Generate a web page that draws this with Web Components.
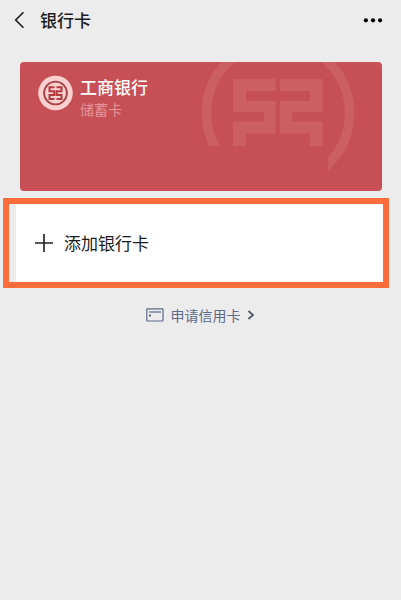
<!DOCTYPE html>
<html lang="zh-CN">
<head>
<meta charset="utf-8">
<meta name="viewport" content="width=device-width, initial-scale=1">
<title>银行卡</title>
<style>
    body {
        margin: 0;
        min-height: 100vh;
        background: #ececec;
        color: #1c1c1c;
        font-family: "Noto Sans CJK SC", "Noto Sans", sans-serif;
    }
</style>
</head>
<body>
<wallet-page>
    <wallet-header slot="header">银行卡</wallet-header>
    <bank-card>
        工商银行
        <span slot="type">储蓄卡</span>
    </bank-card>
    <add-card>添加银行卡</add-card>
    <apply-link slot="footer">申请信用卡</apply-link>
</wallet-page>

<script>
class WalletPage extends HTMLElement {
    constructor() {
        super();
        this.attachShadow({ mode: "open" });
    }

    connectedCallback() {
        this.shadowRoot.innerHTML = `
            <style>
                :host { display: block; }
                main {
                    display: flex;
                    flex-direction: column;
                    gap: 7px;
                    padding-top: 22px;
                }
                footer {
                    display: flex;
                    justify-content: center;
                    padding-top: 15px;
                }
            </style>
            <slot name="header"></slot>
            <main><slot></slot></main>
            <footer><slot name="footer"></slot></footer>
        `;
    }
}

class WalletHeader extends HTMLElement {
    constructor() {
        super();
        this.attachShadow({ mode: "open" });
    }

    connectedCallback() {
        this.shadowRoot.innerHTML = `
            <style>
                :host { display: block; }
                header {
                    display: flex;
                    align-items: center;
                    height: 40px;
                    padding: 0 16px 0 12px;
                }
                h1 {
                    flex: 1;
                    margin: 0 0 0 12px;
                    font-size: 17px;
                    line-height: 24px;
                    font-weight: 500;
                }
                button {
                    display: flex;
                    padding: 0;
                    border: none;
                    background: none;
                    color: inherit;
                }
            </style>
            <header>
                <button type="button" aria-label="返回">
                    <svg width="16" height="20" viewBox="0 0 16 20" fill="none" stroke="currentColor" stroke-width="1.6">
                        <path d="M11.5 2.2L3.7 10L11.5 17.8"/>
                    </svg>
                </button>
                <h1><slot></slot></h1>
                <button type="button" aria-label="更多">
                    <svg width="22" height="20" viewBox="0 0 22 20" fill="#000">
                        <circle cx="2.9" cy="10.3" r="2.1"/>
                        <circle cx="10" cy="10.3" r="2.1"/>
                        <circle cx="17.1" cy="10.3" r="2.1"/>
                    </svg>
                </button>
            </header>
        `;
    }
}

class BankCard extends HTMLElement {
    constructor() {
        super();
        this.attachShadow({ mode: "open" });
    }

    connectedCallback() {
        this.shadowRoot.innerHTML = `
            <style>
                :host { display: block; }
                article {
                    position: relative;
                    display: flex;
                    gap: 7px;
                    box-sizing: border-box;
                    min-height: 129px;
                    margin: 0 19px 0 20px;
                    padding: 13px 18px;
                    border-radius: 4px;
                    background: #c75056;
                    color: #fff;
                    overflow: hidden;
                }
                .watermark {
                    position: absolute;
                    top: 0;
                    right: 0;
                    color: #cb5f64;
                }
                .logo { flex: none; }
                .text { position: relative; }
                h2 {
                    margin: 0;
                    font-size: 17px;
                    line-height: 24px;
                    font-weight: 500;
                }
                p {
                    margin: 0;
                    font-size: 14px;
                    line-height: 20px;
                    color: #e59599;
                }
            </style>
            <article>
                <svg class="watermark" width="200" height="129" viewBox="162 0 200 129" aria-hidden="true">
                    <defs>
                        <clipPath id="cut"><path d="M162 0H258V84H162ZM308 0H362V129H308ZM258 0H308V40H258Z"/></clipPath>
                    </defs>
                    <circle cx="258" cy="51" r="71.5" fill="none" stroke="currentColor" stroke-width="9.5" clip-path="url(#cut)"/>
                    <path fill="currentColor" d="M213 17H255.5V29H226V39H255.5V71.5H226V84H213V59.5H244V50H213Z"/>
                    <path fill="currentColor" d="M302.5 17H260V29H290V39H260V71.5H290V84H302.5V59.5H272V50H302.5Z"/>
                </svg>
                <svg class="logo" width="35" height="36" viewBox="0 0 35 36" aria-hidden="true">
                    <circle cx="17.5" cy="18" r="17.3" fill="#fbd0d0"/>
                    <circle cx="17.5" cy="18" r="11.4" fill="none" stroke="#a94348" stroke-width="1.9"/>
                    <path fill="none" stroke="#b5383e" stroke-width="2" d="M16.5 12.3H11.5V16.2H16.3V20H11.5V23.9H16.5M18.5 12.3H23.5V16.2H18.7V20H23.5V23.9H18.5"/>
                </svg>
                <div class="text">
                    <h2><slot></slot></h2>
                    <p><slot name="type"></slot></p>
                </div>
            </article>
        `;
    }
}

class AddCard extends HTMLElement {
    constructor() {
        super();
        this.attachShadow({ mode: "open" });
    }

    connectedCallback() {
        this.shadowRoot.innerHTML = `
            <style>
                :host {
                    display: block;
                    margin: 0 12px 0 3px;
                    padding-left: 7px;
                    border: 6px solid #fd6d3b;
                }
                button {
                    display: flex;
                    align-items: center;
                    gap: 10px;
                    width: 100%;
                    height: 78px;
                    padding: 0 18px;
                    border: none;
                    background: #fff;
                    color: inherit;
                    font: 17px/24px "Noto Sans CJK SC", "Noto Sans", sans-serif;
                }
            </style>
            <button type="button">
                <svg width="20" height="20" viewBox="0 0 20 20" fill="none" stroke="currentColor" stroke-width="1.6" aria-hidden="true">
                    <path d="M10 1V19M1 10H19"/>
                </svg>
                <slot></slot>
            </button>
        `;
    }
}

class ApplyLink extends HTMLElement {
    constructor() {
        super();
        this.attachShadow({ mode: "open" });
    }

    connectedCallback() {
        this.shadowRoot.innerHTML = `
            <style>
                :host { display: block; }
                a {
                    display: flex;
                    align-items: center;
                    color: #5b6a89;
                    font-size: 14px;
                    line-height: 24px;
                    text-decoration: none;
                }
                .card { margin-right: 7px; }
                .arrow { margin-left: 5px; }
            </style>
            <a href="#apply">
                <svg class="card" width="18" height="14" viewBox="0 0 18 14" fill="none" stroke="currentColor" stroke-width="1.2" aria-hidden="true">
                    <rect x="0.8" y="0.8" width="16.2" height="12.2" rx="0.5"/>
                    <path d="M3 4H15"/>
                    <path d="M3 7.5H5" stroke-width="2"/>
                </svg>
                <slot></slot>
                <svg class="arrow" width="10" height="12" viewBox="0 0 10 12" fill="none" stroke="#4d5568" stroke-width="1.7" aria-hidden="true">
                    <path d="M2.5 2L7 6L2.5 10"/>
                </svg>
            </a>
        `;
    }
}

customElements.define("wallet-page", WalletPage);
customElements.define("wallet-header", WalletHeader);
customElements.define("bank-card", BankCard);
customElements.define("add-card", AddCard);
customElements.define("apply-link", ApplyLink);
</script>
</body>
</html>
